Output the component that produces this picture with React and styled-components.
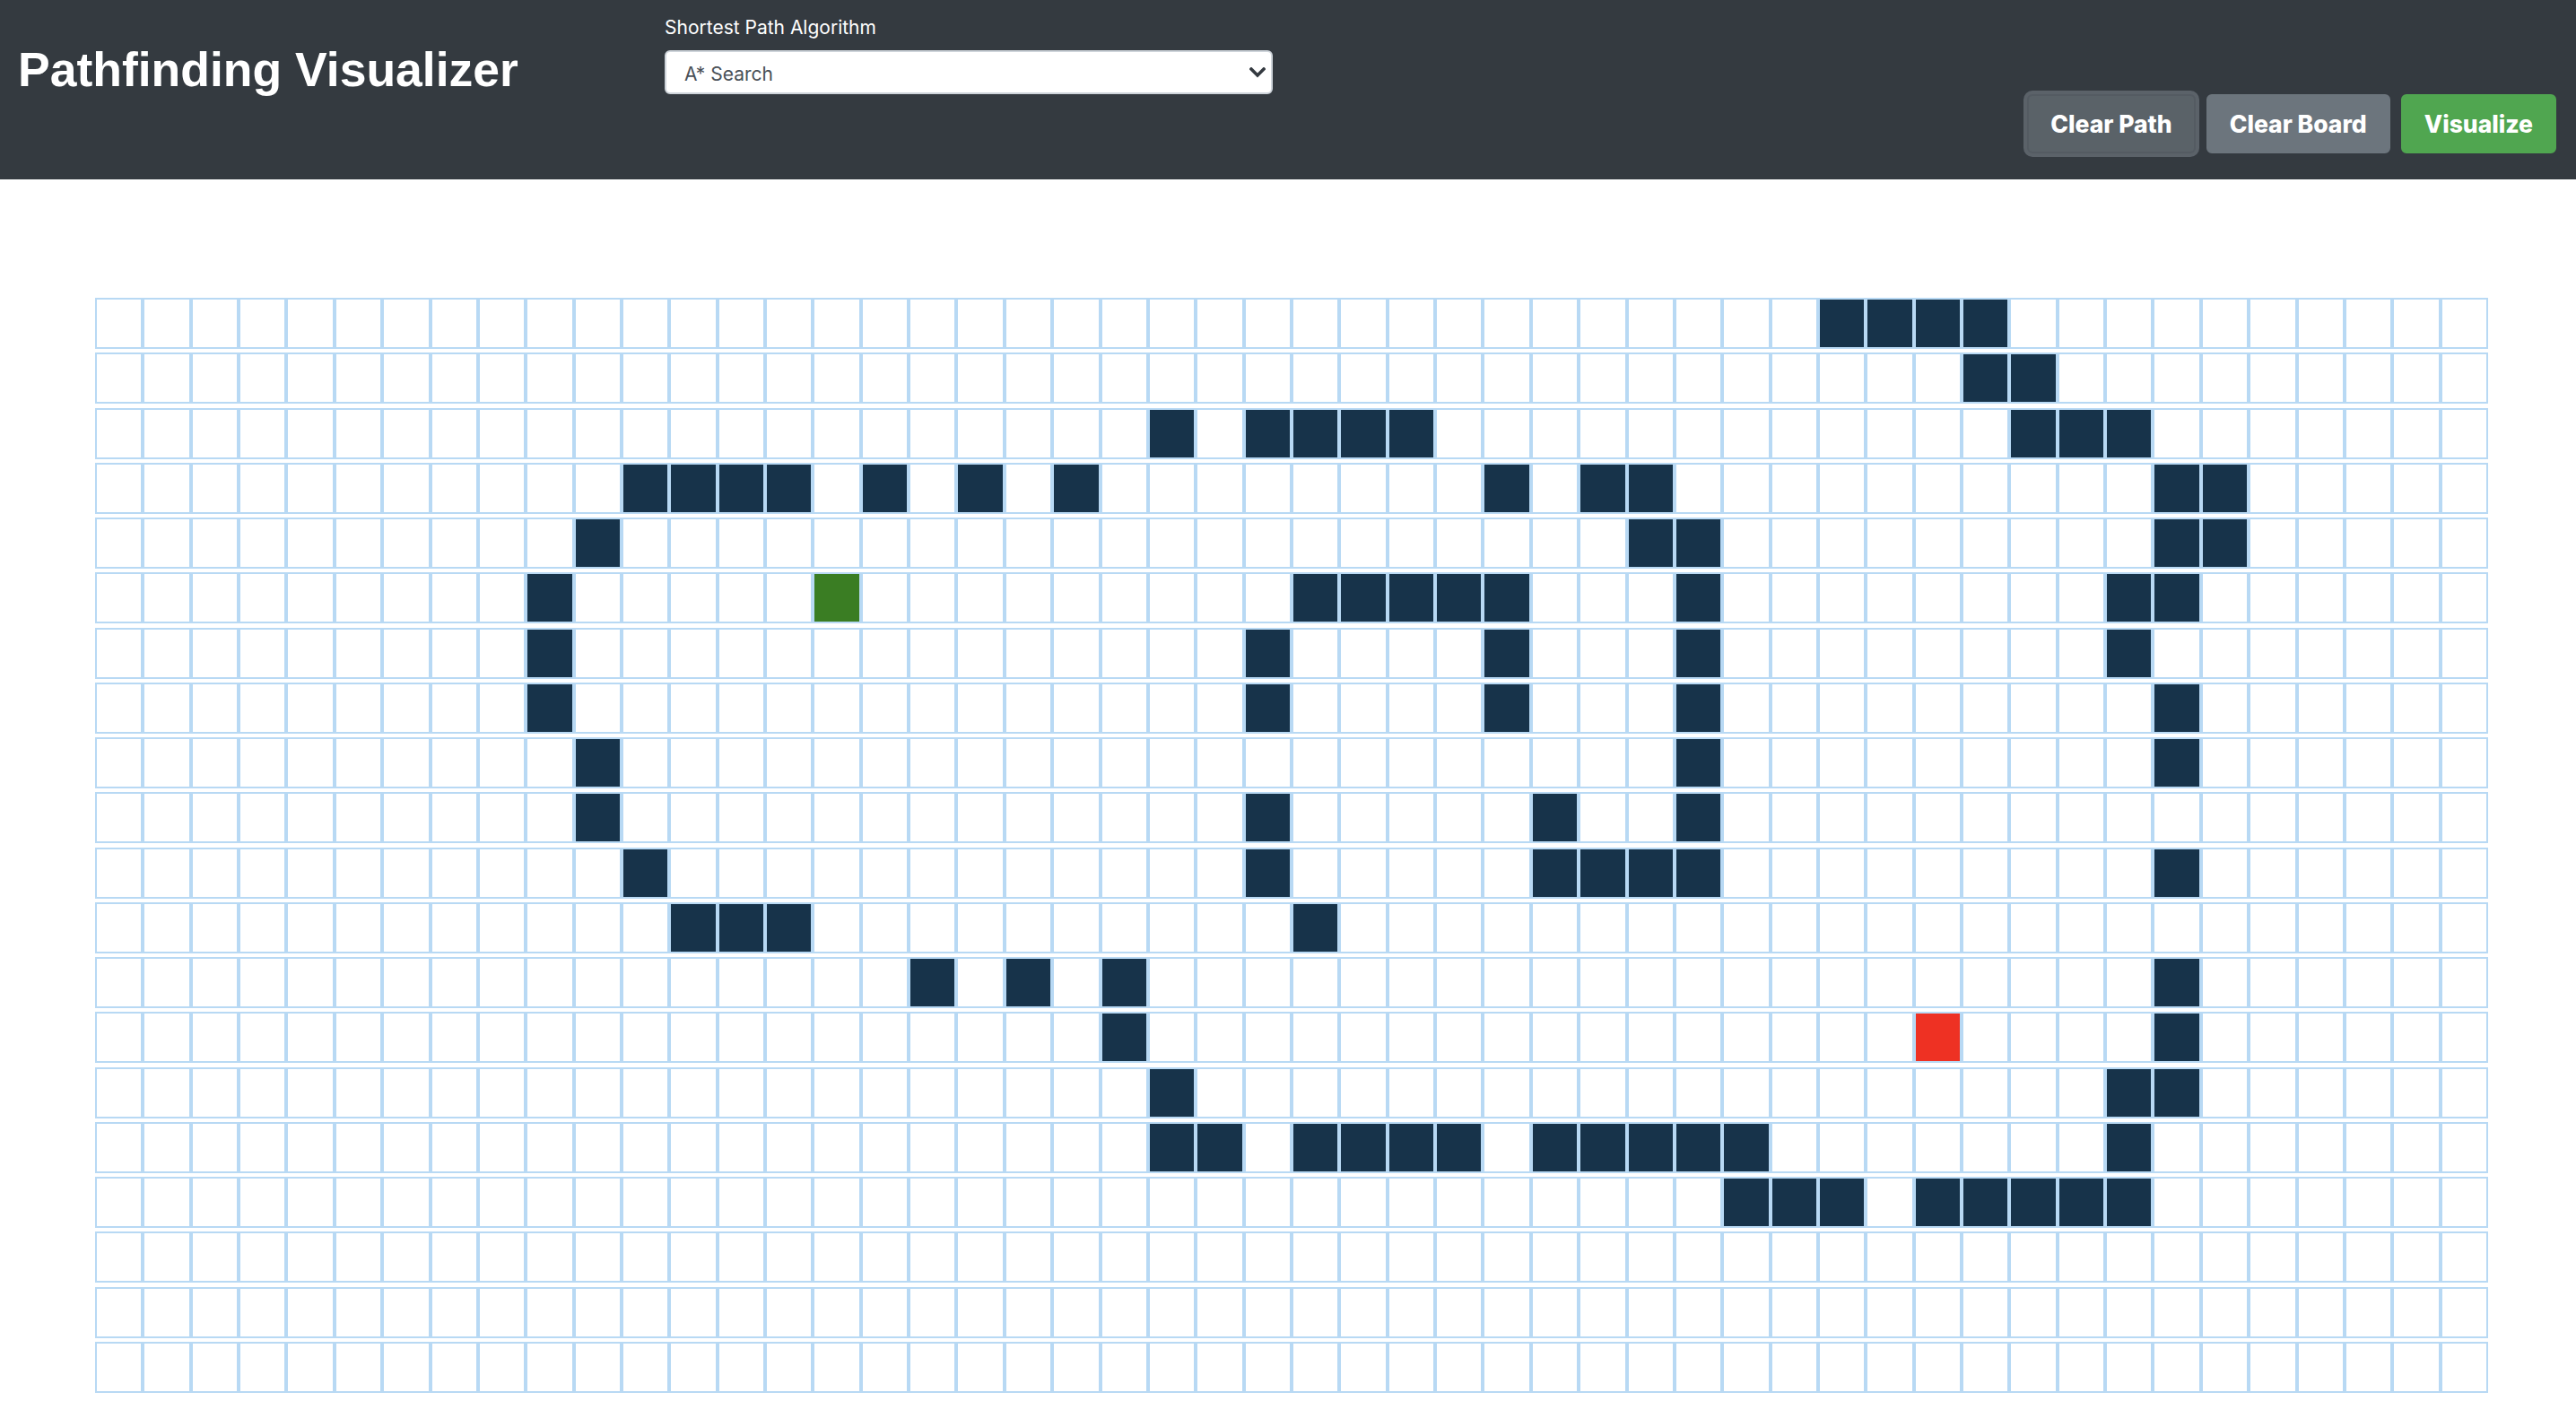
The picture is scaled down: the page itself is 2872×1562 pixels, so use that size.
import React from 'react';
import styled, { createGlobalStyle } from 'styled-components';

const ROWS = 20;
const COLS = 50;
const START = [5, 15];
const END = [13, 38];
const WALLS = {
  0: [36, 37, 38, 39],
  1: [39, 40],
  2: [22, 24, 25, 26, 27, 40, 41, 42],
  3: [11, 12, 13, 14, 16, 18, 20, 29, 31, 32, 43, 44],
  4: [10, 32, 33, 43, 44],
  5: [9, 25, 26, 27, 28, 29, 33, 42, 43],
  6: [9, 24, 29, 33, 42],
  7: [9, 24, 29, 33, 43],
  8: [10, 33, 43],
  9: [10, 24, 30, 33],
  10: [11, 24, 30, 31, 32, 33, 43],
  11: [12, 13, 14, 25],
  12: [17, 19, 21, 43],
  13: [21, 43],
  14: [22, 42, 43],
  15: [22, 23, 25, 26, 27, 28, 30, 31, 32, 33, 34, 42],
  16: [34, 35, 36, 38, 39, 40, 41, 42],
};

const GlobalStyle = createGlobalStyle`
  html, body { margin: 0; padding: 0; background: #ffffff; }
  body { font-family: Inter, "Liberation Sans", sans-serif; }
  * { box-sizing: border-box; }
`;

const Page = styled.div`
  width: 2872px;
  min-height: 1562px;
  background: #ffffff;
`;

const NavBar = styled.header`
  display: flex;
  align-items: flex-start;
  height: 200px;
  background: #343a40;
  padding: 0 22px 0 20px;
`;

const Brand = styled.h1`
  flex: 0 0 721px;
  margin: 51px 0 0;
  font-family: "Liberation Sans", Arial, sans-serif;
  font-weight: 700;
  font-size: 53.5px;
  line-height: 53px;
  color: #ffffff;
`;

const AlgoGroup = styled.div`
  display: flex;
  flex-direction: column;
  width: 678px;
  margin-top: 20px;
`;

const AlgoLabel = styled.label`
  font-family: Inter, "Liberation Sans", sans-serif;
  font-size: 21px;
  line-height: 21px;
  color: #ffffff;
  margin-bottom: 15px;
`;

const SelectWrap = styled.div`
  position: relative;
  width: 678px;
  height: 49px;
`;

const AlgoSelect = styled.select`
  appearance: none;
  -webkit-appearance: none;
  width: 100%;
  height: 100%;
  border: 2px solid #ced4da;
  border-radius: 6px;
  background: #ffffff;
  padding: 3px 40px 0 20px;
  font-family: Inter, "Liberation Sans", sans-serif;
  font-size: 21px;
  color: #495057;
  outline: none;
`;

const Chevron = styled.svg`
  position: absolute;
  right: 8px;
  top: 19px;
  width: 18px;
  height: 12px;
  pointer-events: none;
`;

const ButtonRow = styled.div`
  display: flex;
  gap: 12px;
  margin-left: auto;
  margin-top: 105px;
`;

const variants = {
  active: { bg: '#5a6268', border: '#545b62', ring: '0 0 0 4px rgba(130, 138, 145, 0.5)' },
  secondary: { bg: '#6c757d', border: '#6c757d', ring: 'none' },
  success: { bg: '#50a650', border: '#50a650', ring: 'none' },
};

const ActionButton = styled.button`
  height: 66px;
  padding: 0 24px;
  border-radius: 6px;
  border: 2px solid ${(p) => variants[p.$variant].border};
  background: ${(p) => variants[p.$variant].bg};
  box-shadow: ${(p) => variants[p.$variant].ring};
  color: #ffffff;
  font-family: Inter, "Liberation Sans", sans-serif;
  font-weight: 800;
  font-size: 26.5px;
  line-height: 1;
  cursor: pointer;
`;

const Board = styled.main`
  padding: 132px 0 0 106px;
`;

const Grid = styled.div`
  display: flex;
  flex-direction: column;
  gap: 4.25px;
  width: 2668px;
`;

const GridRow = styled.div`
  display: grid;
  grid-template-columns: repeat(${COLS}, 1fr);
  height: 57px;
`;

const nodeColors = {
  empty: '#ffffff',
  wall: '#17334a',
  start: '#3a7d23',
  end: '#ee3123',
};

const Node = styled.div`
  border: 2px solid #b8d9f4;
  background: ${(p) => nodeColors[p.$kind]};
`;

function kindOf(r, c) {
  if (r === START[0] && c === START[1]) return 'start';
  if (r === END[0] && c === END[1]) return 'end';
  if (WALLS[r] && WALLS[r].includes(c)) return 'wall';
  return 'empty';
}

export default function App() {
  const rows = [];
  for (let r = 0; r < ROWS; r++) {
    const cells = [];
    for (let c = 0; c < COLS; c++) {
      cells.push(<Node key={c} $kind={kindOf(r, c)} />);
    }
    rows.push(<GridRow key={r}>{cells}</GridRow>);
  }
  return (
    <Page>
      <GlobalStyle />
      <NavBar>
        <Brand>Pathfinding Visualizer</Brand>
        <AlgoGroup>
          <AlgoLabel htmlFor="algo">Shortest Path Algorithm</AlgoLabel>
          <SelectWrap>
            <AlgoSelect id="algo" defaultValue="astar">
              <option value="astar">A* Search</option>
              <option value="dijkstra">Dijkstra's Algorithm</option>
              <option value="bfs">Breadth-first Search</option>
              <option value="dfs">Depth-first Search</option>
            </AlgoSelect>
            <Chevron viewBox="0 0 18 12">
              <path d="M2 2 L9 9 L16 2" fill="none" stroke="#343a40" strokeWidth="3.6" strokeLinecap="square" />
            </Chevron>
          </SelectWrap>
        </AlgoGroup>
        <ButtonRow>
          <ActionButton $variant="active">Clear Path</ActionButton>
          <ActionButton $variant="secondary">Clear Board</ActionButton>
          <ActionButton $variant="success">Visualize</ActionButton>
        </ButtonRow>
      </NavBar>
      <Board>
        <Grid>{rows}</Grid>
      </Board>
    </Page>
  );
}
